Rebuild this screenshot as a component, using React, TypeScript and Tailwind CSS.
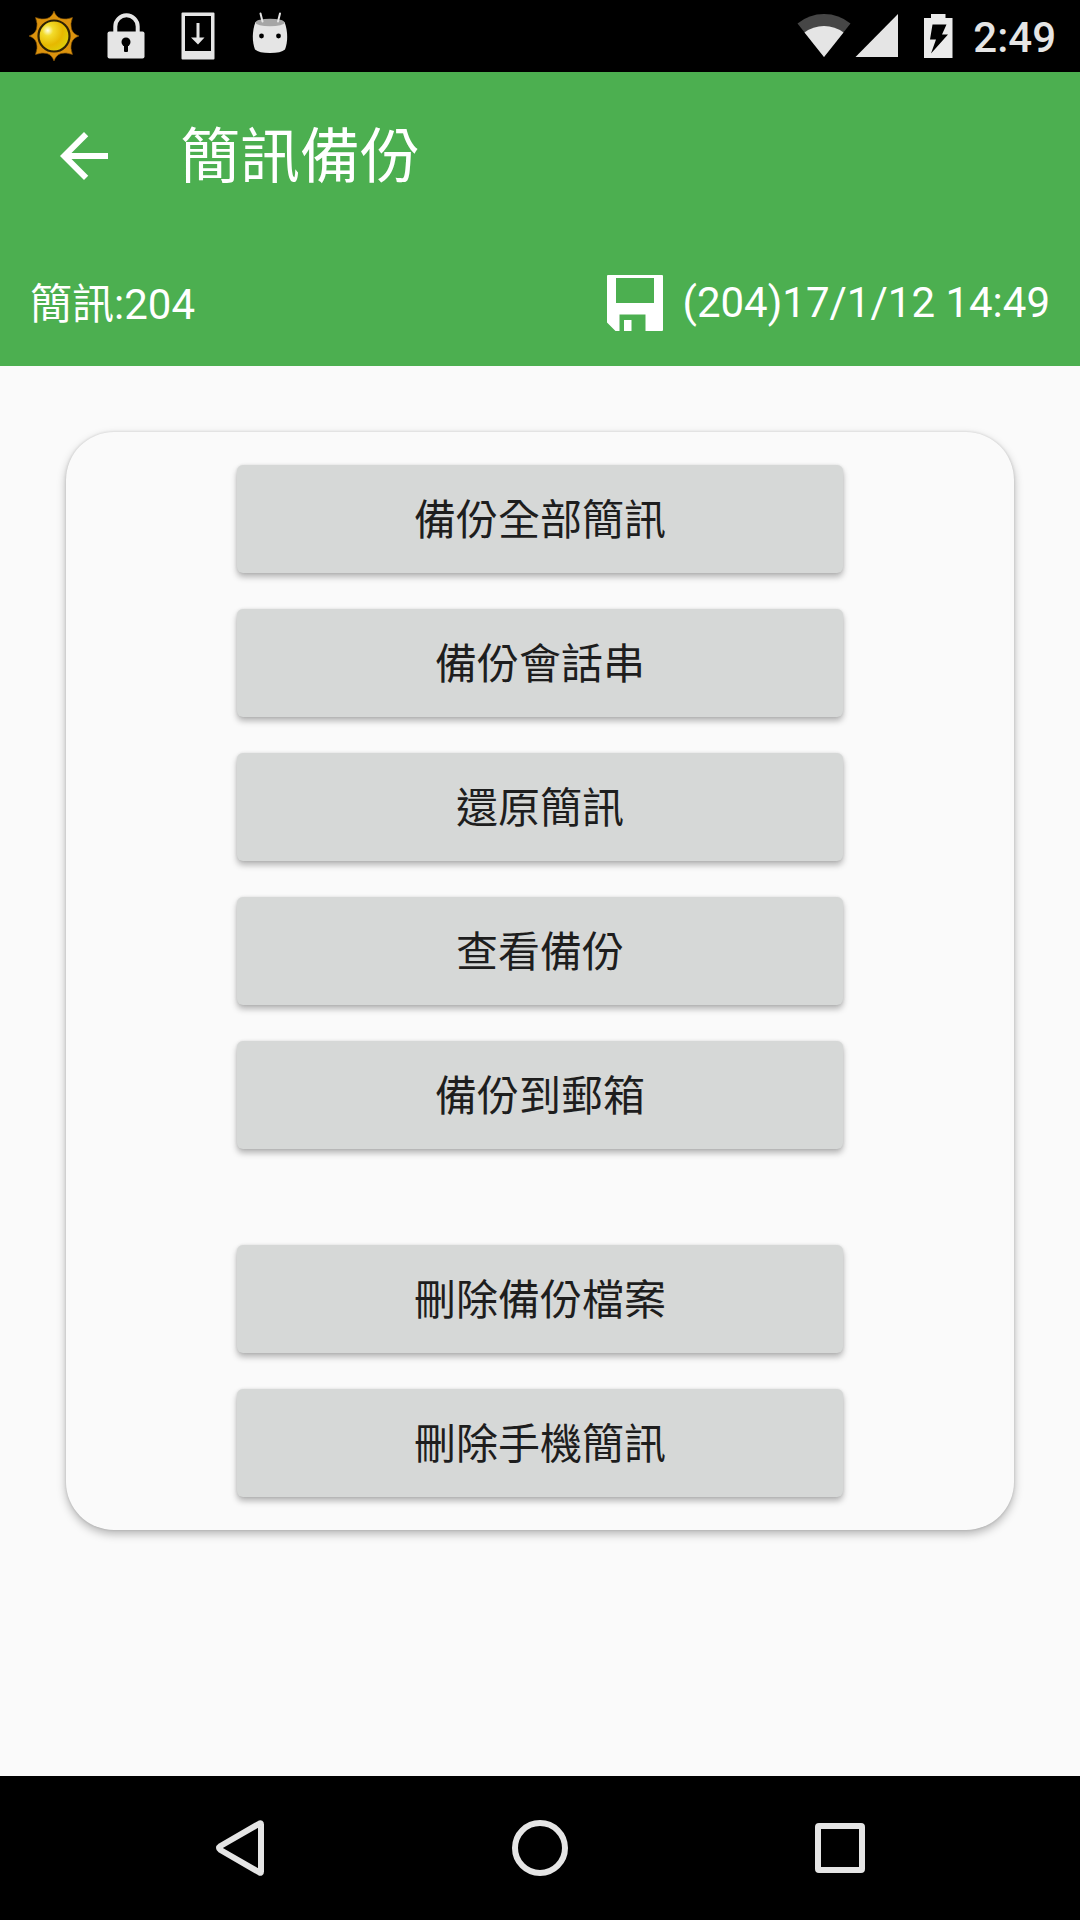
import type { ReactNode } from 'react';

const backupActions = ['備份全部簡訊', '備份會話串', '還原簡訊', '查看備份', '備份到郵箱'];
const deleteActions = ['刪除備份檔案', '刪除手機簡訊'];

function SunIcon() {
  return (
    <svg className="w-[72px] h-[72px]" viewBox="0 0 72 72" aria-hidden="true">
      <defs>
        <radialGradient id="sun" cx="0.3" cy="0.32" r="0.8">
          <stop offset="0" stopColor="#ffffe0" />
          <stop offset="0.22" stopColor="#f3dc2c" />
          <stop offset="0.6" stopColor="#e6b800" />
          <stop offset="1" stopColor="#dcd40c" />
        </radialGradient>
      </defs>
      <path
        d="M36 11Q38 17 43 18.500Q48 20 54.500 17.500Q52 24 53.500 29Q55 34 61 36Q55 38 53.500 43Q52 48 54.500 54.500Q48 52 43 53.500Q38 55 36 61Q34 55 29 53.500Q24 52 17.500 54.500Q20 48 18.500 43Q17 38 11 36Q17 34 18.500 29Q20 24 17.500 17.500Q24 20 29 18.500Q34 17 36 11Z"
        fill="#dc930d"
        stroke="#8a5606"
        strokeWidth="0.6"
      />
      <circle cx="36" cy="36" r="15.500" fill="url(#sun)" stroke="#2e2204" strokeWidth="2.200" />
    </svg>
  );
}

function LockIcon() {
  return (
    <svg className="w-[72px] h-[72px]" viewBox="0 0 72 72" fill="#e5e5e5" aria-hidden="true">
      <path d="M25.300 33V26.500a11.200 11.200 0 0 1 22.400 0V33" fill="none" stroke="#e5e5e5" strokeWidth="4" />
      <rect x="17.500" y="31.500" width="37" height="27" rx="2" />
      <circle cx="36" cy="42" r="4.500" fill="#000" />
      <rect x="34" y="43" width="4" height="9" rx="1" fill="#000" />
    </svg>
  );
}

function DownloadIcon() {
  return (
    <svg className="w-[72px] h-[72px]" viewBox="0 0 72 72" fill="#e5e5e5" aria-hidden="true">
      <path fillRule="evenodd" d="M20.500 12.500h31a1 1 0 0 1 1 1v45a1 1 0 0 1-1 1h-31a1 1 0 0 1-1-1v-45a1 1 0 0 1 1-1ZM23 16v35h26V16Z" />
      <path d="M34.500 23h3v14.500h5L36 44.500l-7-7h5.500Z" />
    </svg>
  );
}

function DroidIcon() {
  return (
    <svg className="w-[72px] h-[72px]" viewBox="0 0 72 72" fill="#e5e5e5" aria-hidden="true">
      <path d="M21.500 22C18 31 18 42 21 49.500Q25 53 36 53T51 49.500C54 42 54 31 50.500 22Z" />
      <ellipse cx="36" cy="22.500" rx="14.500" ry="3.800" fill="#a6a6a6" />
      <path d="M26.500 13.500l2 8M46 13.500l-2 8" stroke="#e5e5e5" strokeWidth="2" strokeLinecap="round" />
      <circle cx="27.500" cy="36" r="2.400" fill="#000" />
      <circle cx="44.500" cy="36" r="2.400" fill="#000" />
    </svg>
  );
}

function StatusBar() {
  return (
    <div className="flex items-center justify-between h-[72px] bg-black pl-[18px] pr-6">
      <div className="flex">
        <SunIcon />
        <LockIcon />
        <DownloadIcon />
        <DroidIcon />
      </div>
      <div className="flex items-center">
        <svg className="w-[54px] h-[72px]" viewBox="0 0 54 72" aria-hidden="true">
          <path d="M27 57L0.500 23.500Q12 14 27 14T53.500 23.500Z" fill="#464646" />
          <path d="M27 57L7.500 32.500Q16 26 27 26T46.500 32.500Z" fill="#e5e5e5" />
        </svg>
        <svg className="w-[44px] h-[72px] ml-1" viewBox="0 0 44 72" aria-hidden="true">
          <path d="M43 14v43H0.500Z" fill="#e5e5e5" />
        </svg>
        <svg className="w-[30px] h-[72px] ml-6" viewBox="0 0 30 72" aria-hidden="true">
          <path d="M8 14h14.500v4H29.500v40H1V18h7Z" fill="#ebebeb" />
          <path d="M9.500 24.500H23.500L19 34.500H25L8 53.500L13 39.500H7Z" fill="#000" />
        </svg>
        <span className="ml-5 pt-1 text-[42px] leading-[48px] font-medium text-[#e5e5e5]">2:49</span>
      </div>
    </div>
  );
}

function SaveIcon() {
  return (
    <svg className="w-[56px] h-[58px]" viewBox="0 0 56 58" aria-hidden="true">
      <path
        fillRule="evenodd"
        fill="#fff"
        d="M1 1H55a1 1 0 0 1 1 1V56a1 1 0 0 1-1 1H38.500V40.500H12.500V57H8.500L0 48.500V2a1 1 0 0 1 1-1ZM9 4V29H47V4ZM17 46h7.500V57H17Z"
      />
    </svg>
  );
}

function ActionButton({ children }: { children: ReactNode }) {
  return (
    <button
      type="button"
      className="w-full h-[108px] pt-1 rounded-md bg-[#d6d8d7] text-[42px] leading-[48px] text-[#1e1e1e] shadow-[0_4px_6px_rgba(0,0,0,0.28),0_0_3px_rgba(0,0,0,0.1)]"
    >
      {children}
    </button>
  );
}

function NavButton({ label, children }: { label: string; children: ReactNode }) {
  return (
    <button type="button" aria-label={label} className="flex flex-1 items-center justify-center">
      <svg className="w-[72px] h-[72px]" viewBox="0 0 72 72" fill="none" stroke="#e5e5e5" strokeWidth="6" strokeLinejoin="round">
        {children}
      </svg>
    </button>
  );
}

export default function App() {
  return (
    <div className="flex flex-col min-h-screen bg-[#fafafa] font-['Roboto','Noto_Sans_CJK_TC',sans-serif]">
      <StatusBar />

      {/* App bar */}
      <header className="bg-[#4caf50] text-white">
        <div className="flex items-center h-[168px] px-12">
          <button type="button" aria-label="返回">
            <svg className="w-[72px] h-[72px]" viewBox="0 0 24 24" fill="#fff">
              <path d="M20 11H7.830l5.590-5.590L12 4l-8 8 8 8 1.410-1.410L7.830 13H20v-2z" />
            </svg>
          </button>
          <h1 className="ml-[60px] pt-1 text-[60px] leading-[72px]">簡訊備份</h1>
        </div>
        <div className="flex items-center justify-between h-[126px] px-[30px] text-[42px] leading-[48px]">
          <span className="pt-1">簡訊:204</span>
          <div className="flex items-center gap-5">
            <SaveIcon />
            <span>(204)17/1/12 14:49</span>
          </div>
        </div>
      </header>

      <main className="flex-1 px-[66px] py-[66px]">
        <section className="rounded-[48px] bg-[#fafafa] py-[33px] shadow-[0_4px_10px_rgba(0,0,0,0.28),0_0_3px_rgba(0,0,0,0.14)]">
          <div className="flex flex-col gap-24 w-[606px] max-w-full mx-auto">
            {[backupActions, deleteActions].map((actions) => (
              <div key={actions[0]} className="flex flex-col gap-9">
                {actions.map((action) => (
                  <ActionButton key={action}>{action}</ActionButton>
                ))}
              </div>
            ))}
          </div>
        </section>
      </main>

      {/* System navigation */}
      <nav className="flex h-36 bg-black px-[90px]">
        <NavButton label="返回">
          <path d="M55.500 11.500Q57 10.500 57 12.500V59.500Q57 61.500 55.500 60.500L16.500 38Q13.500 36 16.500 34Z" />
        </NavButton>
        <NavButton label="主畫面">
          <circle cx="36" cy="36" r="25" />
        </NavButton>
        <NavButton label="最近使用">
          <rect x="14" y="14" width="44" height="44" rx="1" />
        </NavButton>
      </nav>
    </div>
  );
}
